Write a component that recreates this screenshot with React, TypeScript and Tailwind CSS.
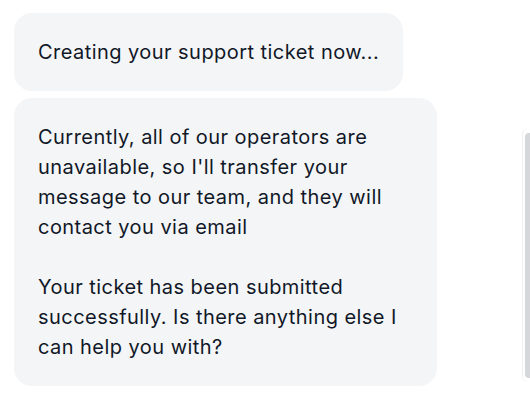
export default function App() {
  return (
    <div
      className="relative h-[400px] w-[530px] overflow-hidden bg-white"
      style={{ fontFamily: "Inter, 'Noto Sans', sans-serif" }}
    >
      <div className="flex flex-col items-start gap-[7px] pl-[14px] pt-[13px]">
        <div className="rounded-[18px] bg-[#f4f5f7] px-6 py-6 text-[20px] leading-[30px] tracking-[0.45px] text-[#111827]">
          Creating your support ticket now...
        </div>
        <div className="w-[423px] rounded-[18px] bg-[#f4f5f7] px-6 py-6 text-[20px] leading-[30px] tracking-[0.45px] text-[#111827] whitespace-pre-line">
          {"Currently, all of our operators are unavailable, so I'll transfer your message to our team, and they will contact you via email\n\nYour ticket has been submitted successfully. Is there anything else I can help you with?"}
        </div>
      </div>
      {/* scrollbar of the chat panel, cut at the right edge */}
      <div className="absolute left-[522px] top-[128px] h-[254px] w-[12px] rounded-l-[6px] border-l border-[#f0f0f2]">
        <div className="ml-[2px] mt-[5px] h-[245px] w-[10px] rounded-l-[4px] bg-[#d5d7db]" />
      </div>
    </div>
  );
}
